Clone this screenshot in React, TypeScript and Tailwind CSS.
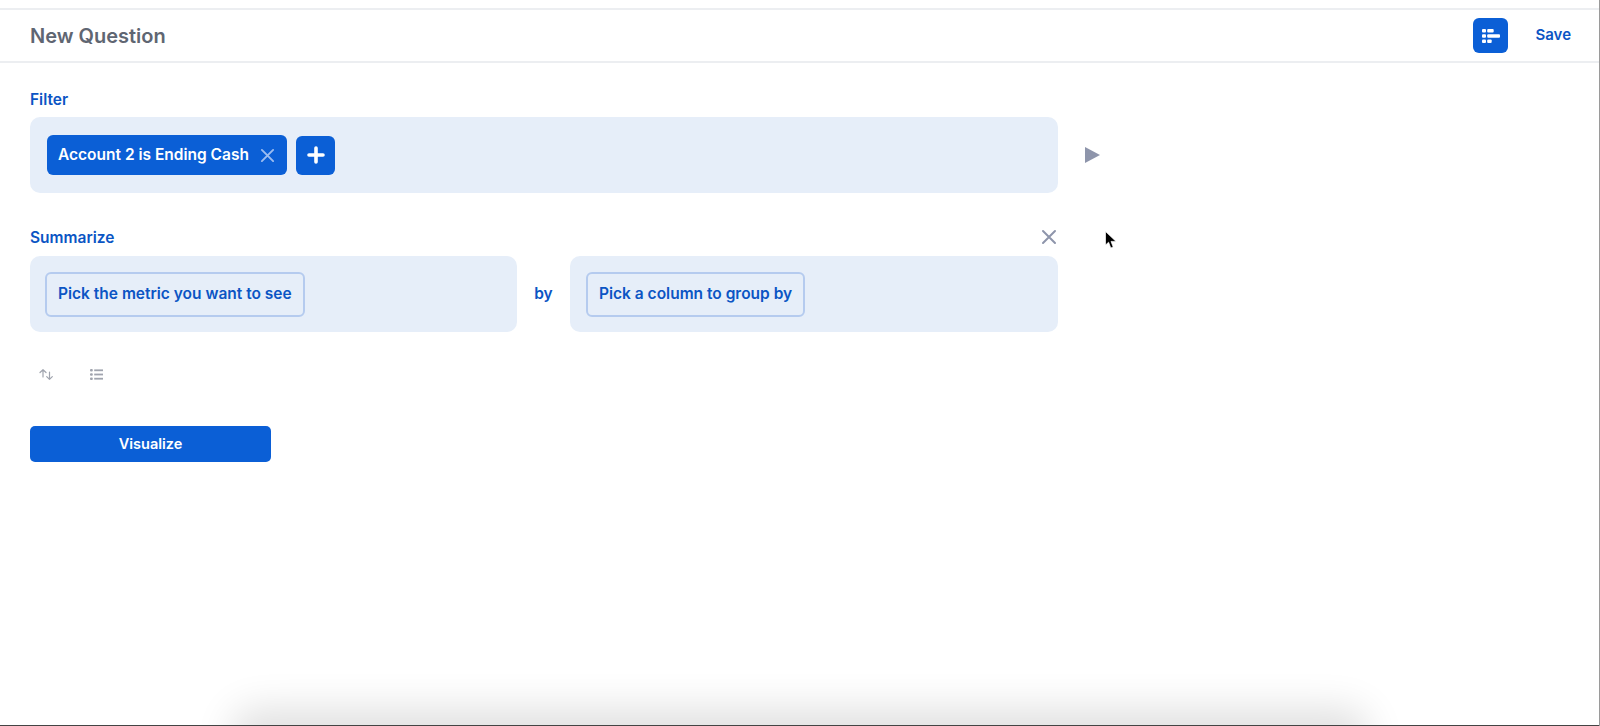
import React from "react";

const XIcon = ({ className }: { className: string }) => (
  <svg viewBox="0 0 16 16" fill="none" stroke="currentColor" strokeWidth="2" strokeLinecap="round" className={className}>
    <path d="M2 2 14 14M14 2 2 14" />
  </svg>
);

export default function App() {
  return (
    <div className="relative h-[726px] w-full overflow-hidden bg-white font-['Inter',sans-serif] border-r border-[#9a9a9a]">
      <div className="h-[8px] bg-white" />
      <header className="flex h-[55px] items-center justify-between border-y-2 border-[#eceef1] pl-[30px] pr-[28px]">
        <h1 className="text-[20px] font-semibold text-[#5f6672]">New Question</h1>
        <div className="flex items-center gap-[27px]">
          <button className="flex h-[35px] w-[35px] items-center justify-center rounded-[6px] bg-[#0b5fd6]">
            <svg viewBox="0 0 18 14" className="h-[14px] w-[18px]" fill="white">
              <rect x="0" y="0" width="4" height="3.4" rx="1" />
              <rect x="0" y="5.3" width="4" height="3.4" rx="1" />
              <rect x="0" y="10.6" width="4" height="3.4" rx="1" />
              <rect x="5.2" y="0" width="6.5" height="3.4" rx="1" />
              <rect x="5.2" y="5.3" width="12.8" height="3.4" rx="1" />
              <rect x="5.2" y="10.6" width="4.5" height="3.4" rx="1" />
            </svg>
          </button>
          <span className="text-[15px] font-semibold text-[#0b55c4]">Save</span>
        </div>
      </header>

      <main className="pl-[30px] pt-[27px]">
        <div className="text-[15.5px] font-semibold leading-[20px] text-[#0b55c4]">Filter</div>
        <div className="mt-[7px] flex items-center">
          <div className="flex h-[76px] w-[1028px] items-center gap-[9px] rounded-[10px] bg-[#e6eef9] pl-[17px]">
            <div className="flex h-[40px] w-[240px] items-center justify-between rounded-[6px] bg-[#0b5fd6] pl-[11px] pr-[12px]">
              <span className="text-[15.5px] font-semibold text-white">Account 2 is Ending Cash</span>
              <XIcon className="h-[15px] w-[15px] text-[#9dbdf0]" />
            </div>
            <button className="flex h-[39px] w-[39px] items-center justify-center rounded-[6px] bg-[#0b5fd6]">
              <svg viewBox="0 0 18 18" className="h-[18px] w-[18px]" stroke="white" strokeWidth="3.6" strokeLinecap="round">
                <path d="M9 2v14M2 9h14" />
              </svg>
            </button>
          </div>
          <svg viewBox="0 0 15 16" className="ml-[27px] h-[16px] w-[15px]" fill="#8e95ab">
            <path d="M0 0 15 8 0 16Z" />
          </svg>
        </div>

        <div className="mt-[35px] flex w-[1028px] items-start justify-between">
          <span className="text-[15.5px] font-semibold leading-[20px] text-[#0b55c4]">Summarize</span>
          <XIcon className="mr-[1px] mt-[1px] h-[16px] w-[16px] text-[#8e95ab]" />
        </div>
        <div className="mt-[8px] flex w-[1028px] items-center">
          <div className="flex h-[76px] w-[487px] items-center rounded-[10px] bg-[#e6eef9] pl-[15px]">
            <div className="flex h-[45px] items-center rounded-[6px] border-2 border-[#b5cbef] px-[11px] text-[15.5px] font-semibold text-[#0b55c4]">
              Pick the metric you want to see
            </div>
          </div>
          <span className="w-[53px] text-center text-[15.5px] font-semibold text-[#0b55c4]">by</span>
          <div className="flex h-[76px] w-[488px] items-center rounded-[10px] bg-[#e6eef9] pl-[16px]">
            <div className="flex h-[45px] items-center rounded-[6px] border-2 border-[#b5cbef] px-[11px] text-[15.5px] font-semibold text-[#0b55c4]">
              Pick a column to group by
            </div>
          </div>
        </div>

        <div className="mt-[34px] flex h-[16px] items-center gap-[37px] pl-[9px]">
          <svg viewBox="0 0 14 11" className="h-[11px] w-[14px]" fill="none" stroke="#a0a4ae" strokeWidth="1.2" strokeLinecap="round" strokeLinejoin="round">
            <path d="M4 8V0.8M1 3.5l3-2.8 3 2.8M10.5 3v7.3M7.7 7.6l2.8 2.8 2.8-2.8" />
          </svg>
          <svg viewBox="0 0 13 11" className="h-[11px] w-[13px]" fill="#a0a4ae">
            <rect x="0" y="0" width="2.8" height="2.6" rx="1" />
            <rect x="0" y="4.2" width="2.8" height="2.6" rx="1" />
            <rect x="0" y="8.4" width="2.8" height="2.6" rx="1" />
            <rect x="4.2" y="0.4" width="8.8" height="1.8" />
            <rect x="4.2" y="4.6" width="8.8" height="1.8" />
            <rect x="4.2" y="8.8" width="8.8" height="1.8" />
          </svg>
        </div>

        <button className="mt-[44px] h-[36px] w-[241px] rounded-[5px] bg-[#0b5fd6] text-[14.5px] font-semibold text-white">
          Visualize
        </button>
      </main>

      <svg viewBox="0 0 12 18" className="absolute left-[1105px] top-[231px] h-[18px] w-[12px]" fill="#000" stroke="#ffffff" strokeWidth="0.7">
        <path d="M0.5 0.5V14L3.6 11.2 5.8 17 8.2 16 6 10.4H11Z" />
      </svg>

      <div className="absolute bottom-[-30px] left-[250px] h-[30px] w-[1100px] rounded-[8px] shadow-[0_0_38px_18px_rgba(0,0,0,0.12)]" />
      <div className="absolute bottom-0 left-0 h-px w-full bg-[#444]" />
    </div>
  );
}
